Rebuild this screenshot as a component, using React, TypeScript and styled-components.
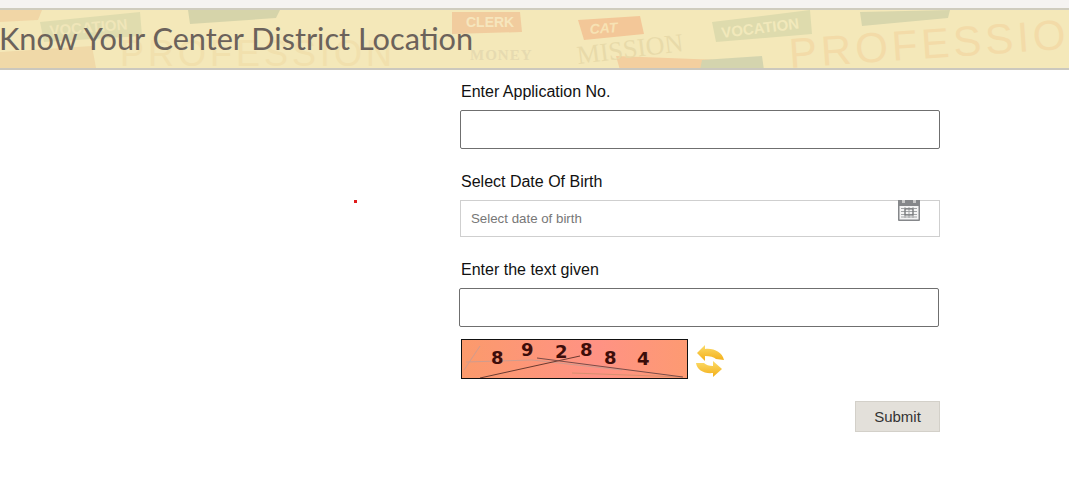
import styled, { createGlobalStyle } from "styled-components";

const GlobalStyle = createGlobalStyle`
  html, body {
    margin: 0;
    padding: 0;
    background: #fff;
    font-family: "Liberation Sans", Arial, sans-serif;
  }
`;

const Page = styled.div`
  position: relative;
  height: 480px;
  overflow: hidden;
`;

const TopStrip = styled.div`
  height: 8px;
  background: #f5f3f1;
`;

const Banner = styled.header`
  position: relative;
  height: 62px;
  box-sizing: border-box;
  background: #f4e8b9;
  border-top: 2px solid #cfccbe;
  border-bottom: 2px solid #cbc8be;
  overflow: hidden;
`;

const Collage = styled.svg`
  position: absolute;
  top: 0;
  left: 0;
`;

const Title = styled.h1`
  position: relative;
  margin: 0;
  font-family: Lato, "Open Sans", sans-serif;
  font-size: 30.7px;
  font-weight: 400;
  line-height: 58px;
  text-indent: -1px;
  color: #6b625b;
  white-space: nowrap;
`;

const Form = styled.form`
  width: 480px;
  margin-left: 460px;
  display: flex;
  flex-direction: column;
`;

const Label = styled.label<{ $top: number }>`
  display: block;
  margin: ${(p) => p.$top}px 0 8px 1px;
  font-size: 16px;
  line-height: 20px;
  color: #111;
`;

const TextInput = styled.input<{ $shift?: boolean }>`
  display: block;
  box-sizing: border-box;
  width: 480px;
  height: 39px;
  margin-left: ${(p) => (p.$shift ? "-1px" : "0")};
  border: 1px solid #6f6f6f;
  border-radius: 2px;
  background: #fff;
  outline: none;
`;

const DateField = styled.div`
  position: relative;
  box-sizing: border-box;
  height: 37px;
  display: flex;
  align-items: center;
  padding: 0 10px;
  border: 1px solid #cfcfcf;
  font-size: 13.3px;
  color: #777;
`;

const CalendarIcon = styled.svg`
  position: absolute;
  top: -1px;
  right: 19px;
`;

const CaptchaRow = styled.div`
  display: flex;
  align-items: flex-end;
  gap: 7px;
  margin: 12px 0 0 1px;
`;

const Captcha = styled.svg`
  display: block;
  border: 1px solid #111;
`;

const RefreshIcon = styled.svg`
  display: block;
  margin-bottom: 2px;
`;

const Actions = styled.div`
  display: flex;
  justify-content: flex-end;
  margin-top: 22px;
`;

const SubmitButton = styled.button`
  box-sizing: border-box;
  width: 85px;
  height: 31px;
  padding: 0;
  border: 1px solid #d3d0c9;
  background: #e3e0da;
  color: #333;
  font-family: "Liberation Sans", Arial, sans-serif;
  font-size: 15px;
`;

const RedDot = styled.span`
  position: absolute;
  left: 354px;
  top: 200px;
  width: 3px;
  height: 3px;
  background: #e01b1b;
`;

const patches = [
  { points: "0,0 42,0 38,10 0,12", fill: "#f1d6a6" },
  { points: "40,12 140,2 142,26 44,32", fill: "#e0dcae" },
  { points: "0,42 92,36 96,58 0,58", fill: "#f0d9a8" },
  { points: "188,0 280,0 276,8 190,14", fill: "#d6d4aa" },
  { points: "452,2 520,2 522,22 452,24", fill: "#f1cc9e" },
  { points: "578,10 640,6 644,24 584,30", fill: "#f3c798" },
  { points: "712,12 810,0 812,24 716,32", fill: "#dedbad" },
  { points: "860,2 950,0 948,8 862,16", fill: "#d8d6ac" },
  { points: "616,46 720,50 730,60 620,60", fill: "#f3cf9f" },
  { points: "702,50 762,46 764,60 700,60", fill: "#d4d4ae" },
];

const App = () => (
  <>
    <GlobalStyle />
    <Page>
      <TopStrip />
      <Banner>
        <Collage width="1069" height="58" viewBox="0 0 1069 58">
          {patches.map((p) => (
            <polygon key={p.points} points={p.points} fill={p.fill} />
          ))}
          <g fontFamily="Liberation Sans, sans-serif" fontWeight="700">
            <text x="50" y="26" fontSize="15" fill="#f0e6b9" transform="rotate(-5 50 26)">VOCATION</text>
            <text x="466" y="17" fontSize="14" fill="#f6e6bd">CLERK</text>
            <text x="590" y="24" fontSize="14" fontStyle="italic" fill="#f7e2b4" transform="rotate(-4 590 24)">CAT</text>
            <text x="722" y="28" fontSize="15" fill="#f2e9bb" transform="rotate(-7 722 28)">VOCATION</text>
          </g>
          <g fontFamily="Liberation Serif, serif">
            <text x="470" y="50" fontSize="15" fontWeight="700" fill="#e6dab0" letterSpacing="1">MONEY</text>
            <text x="578" y="54" fontSize="26" fill="#e8daa9" transform="rotate(-7 578 54)">MISSION</text>
          </g>
          <g fontFamily="Liberation Sans, sans-serif">
            <text x="120" y="56" fontSize="36" fill="#f1e0ad" letterSpacing="4">PROFESSION</text>
            <text x="790" y="58" fontSize="42" fill="#f3dba8" letterSpacing="4" transform="rotate(-4 790 58)">PROFESSIO</text>
          </g>
        </Collage>
        <Title>Know Your Center District Location</Title>
      </Banner>

      <Form>
        <Label $top={12}>Enter Application No.</Label>
        <TextInput type="text" />

        <Label $top={23}>Select Date Of Birth</Label>
        <DateField>
          Select date of birth
          <CalendarIcon width="22" height="22" viewBox="0 0 22 22">
            <path d="M0 0h22v20a1 1 0 0 1-1 1H1a1 1 0 0 1-1-1z" fill="#85878a" />
            <rect x="1.500" y="6" width="19" height="13.500" fill="#f4f4f4" />
            <path d="M3 8.500h16M3 11.500h16M3 14.500h16M3 17h16M7 7v11M11 7v11M15 7v11" stroke="#a2a4a6" strokeWidth="1" fill="none" />
            <rect x="7" y="9" width="8" height="6" fill="none" stroke="#6c6e71" strokeWidth="1" />
            <rect x="4" y="0" width="3" height="3" fill="#c9c9c9" />
            <rect x="15" y="0" width="3" height="3" fill="#c9c9c9" />
          </CalendarIcon>
        </DateField>

        <Label $top={23}>Enter the text given</Label>
        <TextInput type="text" $shift />

        <CaptchaRow>
          <Captcha width="225" height="38" viewBox="0 0 225 38">
            <defs>
              <linearGradient id="captchaBg" x1="0" x2="1" y1="0" y2="0">
                <stop offset="0" stopColor="#fb9a6c" />
                <stop offset="0.6" stopColor="#ff9284" />
                <stop offset="1" stopColor="#fd9a72" />
              </linearGradient>
            </defs>
            <rect width="225" height="38" fill="url(#captchaBg)" />
            <path d="M2 30L18 6M4 22L70 20L160 30" stroke="#cf9c8e" strokeWidth="1" fill="none" />
            <path d="M110 33L220 37" stroke="#d88f70" strokeWidth="1" fill="none" />
            <path d="M18 38L118 16" stroke="#6a3a30" strokeWidth="1" fill="none" />
            <path d="M75 18L221 37" stroke="#7a4c48" strokeWidth="1" fill="none" />
            <g fontFamily="DejaVu Sans, sans-serif" fontSize="18" fontWeight="700" fill="#3d0d0a">
              <text x="29" y="24">8</text>
              <text x="59" y="16">9</text>
              <text x="93" y="18">2</text>
              <text x="118" y="16">8</text>
              <text x="142" y="24">8</text>
              <text x="175" y="25">4</text>
            </g>
          </Captcha>
          <RefreshIcon width="30" height="32" viewBox="0 0 30 32">
            <defs>
              <linearGradient id="arrowGold" x1="0" x2="0" y1="0" y2="1">
                <stop offset="0" stopColor="#fbdc6a" />
                <stop offset="1" stopColor="#f3ae18" />
              </linearGradient>
            </defs>
            <path d="M2 8L10 0V4C19 3 27 7 29 15L21 14C19 12 15 11 10 11V16Z" fill="url(#arrowGold)" />
            <path d="M27 24L18 32V28C9 29 2 25 1 18L9 18C11 20 14 21 18 21V16Z" fill="url(#arrowGold)" />
          </RefreshIcon>
        </CaptchaRow>

        <Actions>
          <SubmitButton type="button">Submit</SubmitButton>
        </Actions>
      </Form>

      <RedDot />
    </Page>
  </>
);

export default App;
